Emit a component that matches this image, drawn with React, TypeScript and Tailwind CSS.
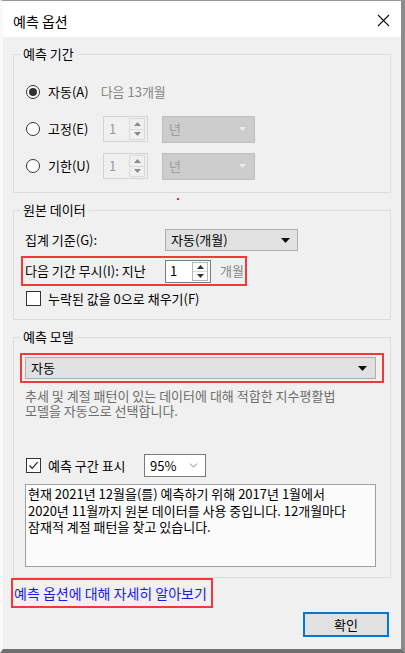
import { ChevronDown } from "lucide-react";

function Radio({ checked }: { checked?: boolean }) {
  return (
    <div className="w-[14px] h-[14px] rounded-full border border-[#333333] bg-white flex items-center justify-center shrink-0">
      {checked && <div className="w-[8px] h-[8px] rounded-full bg-[#333333]" />}
    </div>
  );
}

function Checkbox({ checked }: { checked?: boolean }) {
  return (
    <div className="w-[15px] h-[15px] border border-[#333333] bg-white flex items-center justify-center shrink-0">
      {checked && (
        <svg width="11" height="11" viewBox="0 0 11 11">
          <path d="M1.5 5.5 L4.2 8.3 L9.6 2.2" fill="none" stroke="#222" strokeWidth="1.2" />
        </svg>
      )}
    </div>
  );
}

function Tri({ up, color }: { up?: boolean; color: string }) {
  return (
    <svg width="7" height="4" viewBox="0 0 7 4">
      <path d={up ? "M0 4 L3.5 0 L7 4 Z" : "M0 0 L7 0 L3.5 4 Z"} fill={color} />
    </svg>
  );
}

function SpinBox({ disabled }: { disabled?: boolean }) {
  return (
    <div
      className={
        disabled
          ? "w-[45px] h-[26px] border border-[#d4d4d4] bg-[#f0f0f0] flex items-center shrink-0"
          : "w-[46px] h-[23px] border border-[#7a7a7a] bg-white flex items-center shrink-0"
      }
    >
      <span className={disabled ? "flex-1 pl-[5px] text-[#9a9a9a]" : "flex-1 pl-[4px] text-black"}>1</span>
      <div
        className={
          disabled
            ? "w-[16px] h-[22px] mr-[2px] border border-[#d9d9d9] flex flex-col"
            : "w-[16px] h-[19px] mr-[2px] border border-[#b5b5b5] flex flex-col"
        }
      >
        <div className="flex-1 flex items-center justify-center border-b border-[#d9d9d9]">
          <Tri up color={disabled ? "#8a8a8a" : "#333"} />
        </div>
        <div className="flex-1 flex items-center justify-center">
          <Tri color={disabled ? "#8a8a8a" : "#333"} />
        </div>
      </div>
    </div>
  );
}

function DisabledSelect() {
  return (
    <div className="ml-[14px] w-[93px] h-[27px] bg-[#cccccc] border border-[#bfbfbf] flex items-center justify-between pl-[6px] pr-[8px]">
      <span className="text-[#9d9d9d]">년</span>
      <Tri color="#ececec" />
    </div>
  );
}

export default function App() {
  return (
    <div className="relative w-[405px] h-[653px] bg-[#f0f0f0] border-t border-t-[#9a9a9a] border-r-[4px] border-r-[#8b8b8b] border-b-[4px] border-b-[#707070] border-l-[3px] border-l-[#f9f9f9] flex flex-col overflow-hidden text-[13px] text-black font-['Noto_Sans_CJK_KR','Noto_Sans',sans-serif]">
      {/* Title bar */}
      <div className="h-[36px] bg-white flex items-center justify-between pl-[10px] pr-[11px] shrink-0">
        <span className="text-[14px] leading-[18px] pt-[3px]">예측 옵션</span>
        <svg width="13" height="13" viewBox="0 0 13 13" className="mt-[2px]">
          <path d="M1 1 L12 12 M12 1 L1 12" stroke="#111" strokeWidth="1.1" />
        </svg>
      </div>

      {/* 예측 기간 */}
      <fieldset className="mt-[9px] ml-[10px] w-[378px] border border-[#dcdcdc]">
        <legend className="ml-[6px] px-[3px] leading-[16px]">예측 기간</legend>
        <div className="pt-[17px] pb-[13px] pl-[12px] flex flex-col gap-[11px]">
          <div className="h-[26px] flex items-center">
            <Radio checked />
            <span className="ml-[8px]">자동(A)</span>
            <span className="ml-[12px] text-[#858585]">다음 13개월</span>
          </div>
          <div className="h-[26px] flex items-center">
            <Radio />
            <span className="ml-[8px] w-[55px]">고정(E)</span>
            <SpinBox disabled />
            <DisabledSelect />
          </div>
          <div className="h-[26px] flex items-center">
            <Radio />
            <span className="ml-[8px] w-[55px]">기한(U)</span>
            <SpinBox disabled />
            <DisabledSelect />
          </div>
        </div>
      </fieldset>

      {/* 원본 데이터 */}
      <fieldset className="mt-[9px] ml-[10px] w-[378px] border border-[#dcdcdc]">
        <legend className="ml-[6px] px-[3px] leading-[16px]">원본 데이터</legend>
        <div className="pt-[11px] pb-[13px] flex flex-col">
          <div className="h-[22px] flex items-center pl-[11px]">
            <span className="w-[140px]">집계 기준(G):</span>
            <div className="w-[133px] h-[22px] bg-[#e1e1e1] border border-[#adadad] flex items-center justify-between pl-[5px] pr-[7px]">
              <span>자동(개월)</span>
              <svg width="9" height="5" viewBox="0 0 9 5">
                <path d="M0 0 L9 0 L4.5 5 Z" fill="#111" />
              </svg>
            </div>
          </div>
          <div className="mt-[5px] ml-[7px] w-[226px] h-[30px] border-2 border-[#ee3a3a] flex items-center pl-[2px]">
            <span className="w-[140px] whitespace-nowrap">다음 기간 무시(I): 지난</span>
            <SpinBox />
            <span className="ml-[9px] text-[#858585]">개월</span>
          </div>
          <div className="mt-[5px] h-[15px] flex items-center pl-[12px] gap-[7px]">
            <Checkbox />
            <span>누락된 값을 0으로 채우기(F)</span>
          </div>
        </div>
      </fieldset>

      {/* 예측 모델 */}
      <fieldset className="mt-[9px] ml-[10px] w-[378px] border border-[#dcdcdc]">
        <legend className="ml-[6px] px-[3px] leading-[16px]">예측 모델</legend>
        <div className="pt-[8px] pb-[10px] flex flex-col">
          <div className="ml-[6px] w-[364px] h-[30px] border-2 border-[#ee3a3a] flex items-center pl-[3px]">
            <div className="w-[351px] h-[22px] bg-[#e1e1e1] border border-[#adadad] flex items-center justify-between pl-[5px] pr-[8px]">
              <span>자동</span>
              <svg width="9" height="5" viewBox="0 0 9 5">
                <path d="M0 0 L9 0 L4.5 5 Z" fill="#111" />
              </svg>
            </div>
          </div>
          <p className="mt-[5px] pl-[11px] leading-[15px] text-[#6d6d6d] whitespace-nowrap">
            추세 및 계절 패턴이 있는 데이터에 대해 적합한 지수평활법
            <br />
            모델을 자동으로 선택합니다.
          </p>
          <div className="mt-[36px] h-[23px] flex items-center pl-[12px]">
            <Checkbox checked />
            <span className="ml-[7px] w-[96px]">예측 구간 표시</span>
            <div className="w-[62px] h-[23px] border border-[#7a7a7a] bg-white flex items-center justify-between pl-[5px] pr-[5px]">
              <span>95%</span>
              <ChevronDown size={13} strokeWidth={1.3} color="#555" />
            </div>
          </div>
          <div className="mt-[7px] ml-[11px] w-[351px] h-[83px] border border-[#a0a0a0] bg-[#fbfbfb] px-[2px] pt-[1px] leading-[16.5px] whitespace-nowrap">
            현재 2021년 12월을(를) 예측하기 위해 2017년 1월에서
            <br />
            2020년 11월까지 원본 데이터를 사용 중입니다. 12개월마다
            <br />
            잠재적 계절 패턴을 찾고 있습니다.
          </div>
        </div>
      </fieldset>

      {/* Link */}
      <div className="ml-[8px] w-[202px] h-[30px] border-2 border-[#ee3a3a] flex items-center pl-[1px]">
        <span className="text-[14px] text-[#1a1aee] whitespace-nowrap">예측 옵션에 대해 자세히 알아보기</span>
      </div>

      {/* OK button */}
      <div className="mt-[4px] ml-auto mr-[12px] w-[86px] h-[25px] border-2 border-[#0078d7] bg-[#e1e1e1] flex items-center justify-center">
        확인
      </div>

      <span className="absolute left-[174px] top-[197px] w-[2px] h-[2px] bg-[#ff2020]" />
    </div>
  );
}
